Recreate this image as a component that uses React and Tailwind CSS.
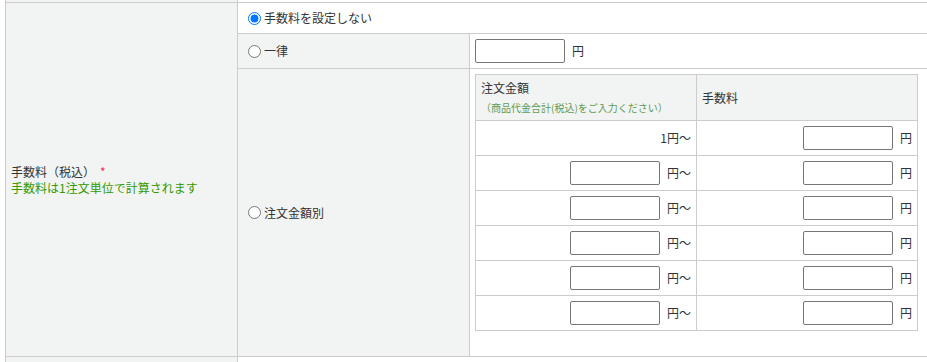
import React from "react";

const font = { fontFamily: '"Noto Sans CJK JP", "Noto Sans", sans-serif' };

function Radio({ checked, label }) {
  return (
    <label className="flex items-center text-[12px] leading-[16px] text-[#333]">
      <input
        type="radio"
        name="fee"
        defaultChecked={checked}
        className="m-0 ml-[5px] mr-[3px] h-[13px] w-[13px]"
      />
      <span>{label}</span>
    </label>
  );
}

function Field() {
  return (
    <input
      type="text"
      className="h-[24px] w-[90px] rounded-[2px] border border-[#767676] bg-white"
    />
  );
}

export default function App() {
  const rows = [0, 1, 2, 3, 4];
  return (
    <div
      className="h-[362px] w-[927px] overflow-hidden bg-white text-[12px] text-[#333]"
      style={font}
    >
      <div className="pl-[5px]">
        {/* partial row above */}
        <div className="grid h-[2px] grid-cols-[233px_232px_1fr]">
          <div className="border-x border-[#cccccc] bg-[#f2f4f3]" />
          <div />
          <div />
        </div>

        <div className="grid grid-cols-[233px_232px_1fr] grid-rows-[31px_35px_288px] border-t border-[#cccccc]">
          {/* left label */}
          <div className="row-span-3 flex items-center border-x border-b border-[#cccccc] bg-[#f2f4f3] pl-[5px]">
            <div className="leading-[16px]">
              <div>
                手数料（税込）<span className="ml-[5px] text-[#e8334a]">*</span>
              </div>
              <div className="text-[#339900]">手数料は1注文単位で計算されます</div>
            </div>
          </div>

          {/* row 1 */}
          <div className="col-span-2 flex items-center border-b border-[#cccccc] bg-white pl-[5px]">
            <Radio checked label="手数料を設定しない" />
          </div>

          {/* row 2 */}
          <div className="flex items-center border-r border-b border-[#cccccc] bg-[#f2f4f3] pl-[5px]">
            <Radio label="一律" />
          </div>
          <div className="flex items-center gap-[7px] border-b border-[#cccccc] bg-white pl-[5px]">
            <Field />
            <span>円</span>
          </div>

          {/* row 3 */}
          <div className="flex items-center border-r border-b border-[#cccccc] bg-[#f2f4f3] pl-[5px]">
            <Radio label="注文金額別" />
          </div>
          <div className="border-b border-[#cccccc] bg-white pl-[5px] pt-[5px]">
            <div className="grid w-[443px] grid-cols-[221px_221px] grid-rows-[46px_repeat(6,35px)] border-l border-t border-[#cccccc]">
              <div className="border-r border-b border-[#cccccc] bg-[#f2f4f3] pl-[5px] pt-[5px]">
                <div className="leading-[16px]">注文金額</div>
                <div className="mt-[5px] text-[10px] leading-[14px] text-[#5f9a50]">
                  （商品代金合計(税込)をご入力ください）
                </div>
              </div>
              <div className="flex items-center border-r border-b border-[#cccccc] bg-[#f2f4f3] pl-[5px]">
                手数料
              </div>

              <div className="flex items-center justify-end border-r border-b border-[#cccccc] pr-[5px]">
                1円～
              </div>
              <div className="flex items-center justify-end gap-[7px] border-r border-b border-[#cccccc] pr-[5px]">
                <Field />
                <span>円</span>
              </div>

              {rows.map((r) => (
                <React.Fragment key={r}>
                  <div className="flex items-center justify-end gap-[7px] border-r border-b border-[#cccccc] pr-[5px]">
                    <Field />
                    <span>円～</span>
                  </div>
                  <div className="flex items-center justify-end gap-[7px] border-r border-b border-[#cccccc] pr-[5px]">
                    <Field />
                    <span>円</span>
                  </div>
                </React.Fragment>
              ))}
            </div>
          </div>
        </div>

        {/* partial row below */}
        <div className="grid h-[6px] grid-cols-[233px_232px_1fr]">
          <div className="border-x border-[#cccccc] bg-[#f2f4f3]" />
          <div />
          <div />
        </div>
      </div>
    </div>
  );
}
